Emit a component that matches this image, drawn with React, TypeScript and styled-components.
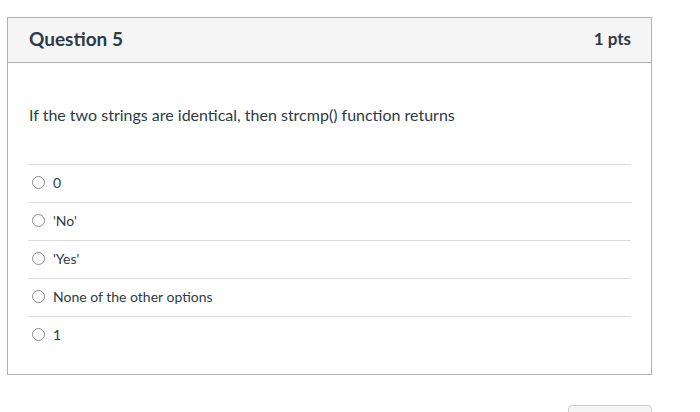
import React from 'react'
import styled, { createGlobalStyle } from 'styled-components'

const GlobalStyle = createGlobalStyle`
  html, body {
    margin: 0;
    padding: 0;
    background: #ffffff;
    font-family: Lato, 'Liberation Sans', sans-serif;
    color: #2d3b45;
  }
`

const answers = ['0', "'No'", "'Yes'", 'None of the other options', '1']

const Page = styled.div`
  width: 700px;
  height: 412px;
  overflow: hidden;
  padding: 17px 0 0 7px;
  box-sizing: border-box;
  display: flex;
  flex-direction: column;
`

const Card = styled.div`
  width: 645px;
  box-sizing: border-box;
  border: 1px solid #b0b0b0;
`

const Header = styled.div`
  height: 45px;
  box-sizing: border-box;
  background: #f5f5f5;
  border-bottom: 1px solid #b0b0b0;
  display: flex;
  align-items: center;
  justify-content: space-between;
  padding: 0 20px 3px 21px;
`

const Title = styled.h2`
  margin: 0;
  font-size: 19px;
  font-weight: 700;
  color: #2d3b45;
`

const Points = styled.span`
  font-size: 17px;
  font-weight: 700;
  color: #2d3b45;
`

const Body = styled.div`
  padding: 42px 20px 20px 20px;
`

const Prompt = styled.p`
  margin: 0 0 39px 1px;
  font-size: 16px;
  line-height: 20px;
`

const AnswerList = styled.div`
  display: flex;
  flex-direction: column;
`

const Answer = styled.label`
  height: 38px;
  box-sizing: border-box;
  border-top: 1px solid #dcdcdc;
  display: flex;
  align-items: center;
  gap: 8px;
  padding: 0 0 2px 4px;
  font-size: 14px;
  color: #2d3b45;
`

const Radio = styled.span`
  width: 13px;
  height: 13px;
  box-sizing: border-box;
  border: 1px solid #8b8b8b;
  border-radius: 50%;
  background: #ffffff;
  flex: none;
`

const Footer = styled.div`
  width: 645px;
  display: flex;
  justify-content: flex-end;
  padding-top: 30px;
`

const NextButton = styled.button`
  width: 84px;
  height: 36px;
  border: 1px solid #c7cdd1;
  border-radius: 4px;
  background: #f5f5f5;
`

export default function App() {
  return (
    <>
      <GlobalStyle />
      <Page>
        <Card>
          <Header>
            <Title>Question 5</Title>
            <Points>1 pts</Points>
          </Header>
          <Body>
            <Prompt>If the two strings are identical, then strcmp() function returns</Prompt>
            <AnswerList>
              {answers.map((a) => (
                <Answer key={a}>
                  <Radio />
                  {a}
                </Answer>
              ))}
            </AnswerList>
          </Body>
        </Card>
        <Footer>
          <NextButton />
        </Footer>
      </Page>
    </>
  )
}
